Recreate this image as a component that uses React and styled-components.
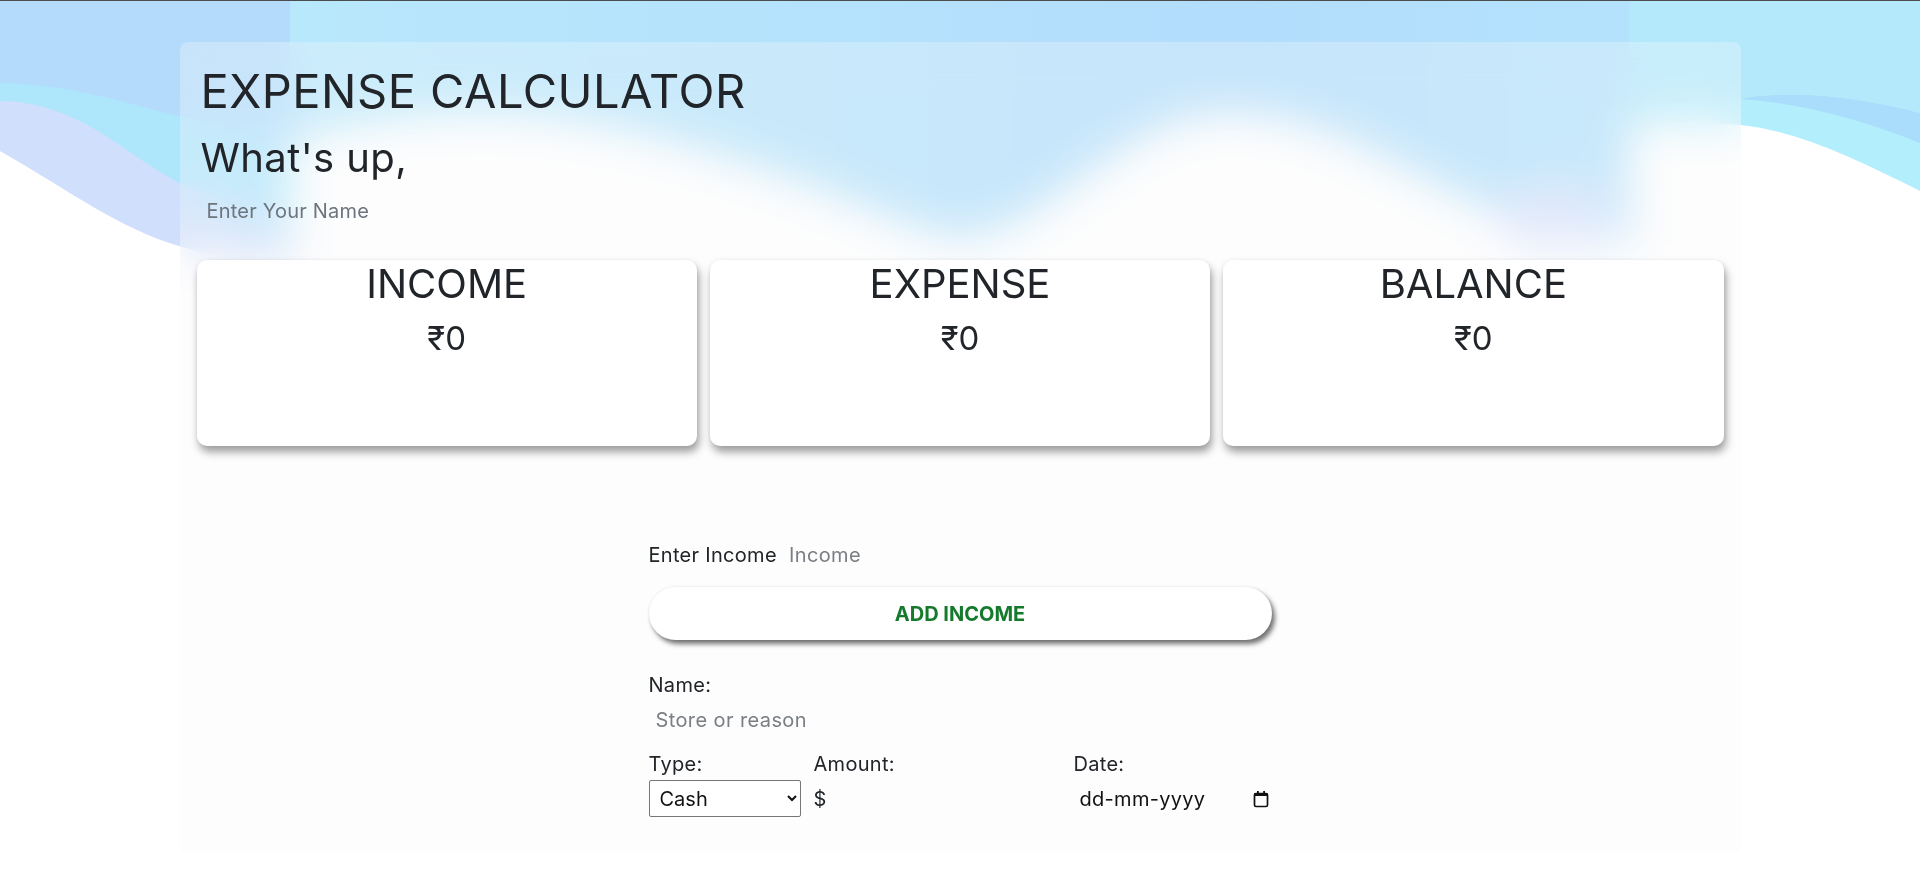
import React from 'react';
import styled, { createGlobalStyle } from 'styled-components';

const GlobalStyle = createGlobalStyle`
  html, body {
    margin: 0;
    padding: 0;
  }
  body {
    font-family: Inter, "Open Sans", sans-serif;
    color: #212529;
    background: #fff;
  }
  * {
    box-sizing: border-box;
  }
`;

const Backdrop = () => (
  <BackdropSvg viewBox="0 0 1920 893" preserveAspectRatio="none">
    <defs>
      <linearGradient id="bandSky" x1="0" y1="0" x2="1" y2="0">
        <stop offset="0" stopColor="#b8e8fc" />
        <stop offset="0.7" stopColor="#b2ddfc" />
        <stop offset="1" stopColor="#b4e2fc" />
      </linearGradient>
    </defs>
    <rect x="0" y="0" width="1920" height="893" fill="#fff" />
    {/* left waves */}
    <path d="M0 0 H290 V262 C240 258 200 252 179 245 C120 228 70 190 0 150 Z" fill="#cfdffc" />
    <path d="M0 0 H290 V235 C250 215 215 195 179 182 C140 160 110 135 80 120 C55 108 30 100 0 100 Z" fill="#aee6fc" />
    <path d="M0 0 H290 V140 C240 128 200 120 179 115 C130 104 80 84 0 82 Z" fill="#b4dbfc" />
    {/* right waves */}
    <path d="M1629 0 H1920 V190 C1860 160 1800 130 1740 124 C1700 120 1660 122 1629 124 Z" fill="#b3eefc" />
    <path d="M1740 98 C1790 88 1860 96 1920 112 V142 C1860 118 1800 102 1740 98 Z" fill="#a9ddfb" />
    <path d="M1629 0 H1920 V112 C1860 96 1790 88 1740 98 C1700 104 1660 110 1629 114 Z" fill="#b4e9fc" />
    {/* centre band */}
    <rect x="290" y="0" width="1339" height="262" fill="url(#bandSky)" />
    <path
      d="M290 140 C350 122 420 110 500 112 C600 116 700 145 800 180 C880 210 930 236 960 236 C1040 236 1120 118 1217 112 C1320 106 1400 168 1480 203 C1530 226 1570 238 1629 243 V262 H290 Z"
      fill="#fff"
    />
    <ellipse cx="1555" cy="215" rx="60" ry="32" fill="#d9e3fd" />
  </BackdropSvg>
);

const CalendarIcon = () => (
  <svg width="16" height="18" viewBox="0 0 16 18">
    <rect x="1.5" y="3.5" width="13" height="13" rx="1.5" fill="none" stroke="#111" strokeWidth="1.7" />
    <rect x="1.5" y="3" width="13" height="3" fill="#111" />
    <rect x="4" y="1" width="1.8" height="3" fill="#111" />
    <rect x="10.2" y="1" width="1.8" height="3" fill="#111" />
  </svg>
);

const summary = [
  { title: 'INCOME', amount: '₹0' },
  { title: 'EXPENSE', amount: '₹0' },
  { title: 'BALANCE', amount: '₹0' },
];

const App = () => {
  return (
    <Page>
      <GlobalStyle />
      <Backdrop />
      <Panel>
        <Header>
          <Title>EXPENSE CALCULATOR</Title>
          <Greeting>What's up,</Greeting>
          <NameInput placeholder="Enter Your Name" />
        </Header>

        <Cards>
          {summary.map((s) => (
            <Card key={s.title}>
              <CardTitle>{s.title}</CardTitle>
              <CardAmount>{s.amount}</CardAmount>
            </Card>
          ))}
        </Cards>

        <Form>
          <IncomeRow>
            <Label>Enter Income</Label>
            <InlineInput placeholder="Income" />
          </IncomeRow>
          <AddButton type="button">ADD INCOME</AddButton>

          <NameBlock>
            <Label>Name:</Label>
            <PlainInput placeholder="Store or reason" />
          </NameBlock>

          <FieldGrid>
            <Field>
              <Label>Type:</Label>
              <TypeSelect defaultValue="Cash">
                <option>Cash</option>
                <option>Card</option>
              </TypeSelect>
            </Field>
            <Field>
              <Label>Amount:</Label>
              <AmountGroup>
                <Dollar>$</Dollar>
                <AmountInput />
              </AmountGroup>
            </Field>
            <Field>
              <Label>Date:</Label>
              <DateBox>
                <DateText>dd-mm-yyyy</DateText>
                <CalendarIcon />
              </DateBox>
            </Field>
          </FieldGrid>
        </Form>
      </Panel>
    </Page>
  );
};

// Styled Components
const Page = styled.div`
  position: relative;
  min-height: 893px;
  overflow: hidden;
  border-top: 1px solid #4d4d4d;
`;

const BackdropSvg = styled.svg`
  position: absolute;
  top: 0;
  left: 0;
  width: 100%;
  height: 893px;
  z-index: 0;
`;

const Panel = styled.main`
  position: relative;
  z-index: 1;
  width: 1561px;
  margin: 41px auto 0;
  padding: 21px 17px 36px;
  border-radius: 8px;
  background: rgba(248, 248, 248, 0.3);
  backdrop-filter: blur(22px);
  -webkit-backdrop-filter: blur(22px);
`;

const Header = styled.header`
  padding-left: 4px;
`;

const Title = styled.h1`
  margin: 0;
  font-size: 47px;
  font-weight: 400;
  line-height: 1.2;
  letter-spacing: 0.5px;
`;

const Greeting = styled.h2`
  margin: 15px 0 0;
  font-size: 40px;
  font-weight: 400;
  line-height: 1.2;
  letter-spacing: 0.4px;
`;

const NameInput = styled.input`
  display: block;
  margin-top: 10px;
  height: 38px;
  width: 320px;
  padding: 0 6px;
  border: none;
  background: transparent;
  font-family: inherit;
  font-size: 20px;
  letter-spacing: 0.2px;
  color: #212529;
  outline: none;

  &::placeholder {
    color: #6c757d;
  }
`;

const Cards = styled.section`
  display: grid;
  grid-template-columns: repeat(3, 1fr);
  gap: 13px;
  margin-top: 30px;
`;

const Card = styled.div`
  height: 186px;
  border-radius: 10px;
  background: #fff;
  box-shadow: 2px 6px 9px rgba(0, 0, 0, 0.38), 0 0 4px rgba(0, 0, 0, 0.05);
  text-align: center;
`;

const CardTitle = styled.h3`
  margin: 0;
  font-size: 40px;
  font-weight: 400;
  line-height: 1.2;
`;

const CardAmount = styled.div`
  margin-top: 11px;
  font-size: 33px;
  line-height: 1.2;
`;

const Form = styled.form`
  width: 623px;
  margin: 94px auto 0;
`;

const Label = styled.label`
  display: block;
  font-size: 20px;
  line-height: 1.5;
  letter-spacing: 0.3px;
  color: #212529;
`;

const IncomeRow = styled.div`
  display: flex;
  align-items: center;
  gap: 12px;

  ${Label} {
    display: inline-block;
  }
`;

const InlineInput = styled.input`
  flex: 1;
  border: none;
  background: transparent;
  padding: 0;
  font-family: inherit;
  font-size: 20px;
  letter-spacing: 0.4px;
  outline: none;

  &::placeholder {
    color: #7a7f85;
  }
`;

const AddButton = styled.button`
  display: block;
  width: 100%;
  height: 53px;
  margin-top: 17px;
  border: none;
  border-radius: 27px;
  background: #fff;
  box-shadow: 3px 4px 5px rgba(0, 0, 0, 0.55), 0 0 3px rgba(0, 0, 0, 0.08);
  font-family: inherit;
  font-size: 20px;
  font-weight: 700;
  color: #147a2c;
  cursor: pointer;
`;

const NameBlock = styled.div`
  margin-top: 30px;
`;

const PlainInput = styled.input`
  display: block;
  width: 100%;
  height: 38px;
  margin-top: 1px;
  padding: 0 7px;
  border: none;
  background: transparent;
  font-family: inherit;
  font-size: 20px;
  letter-spacing: 0.4px;
  outline: none;

  &::placeholder {
    color: #7a7f85;
  }
`;

const FieldGrid = styled.div`
  display: grid;
  grid-template-columns: 152px minmax(0, 1fr) 198px;
  column-gap: 13px;
  margin-top: 10px;
`;

const Field = styled.div`
  display: flex;
  flex-direction: column;
  gap: 1px;
  min-width: 0;
`;

const TypeSelect = styled.select`
  height: 37px;
  width: 152px;
  padding: 0 6px;
  border: 1px solid #767676;
  border-radius: 2px;
  background: #fff;
  font-family: inherit;
  font-size: 20px;
  color: #111;
`;

const AmountGroup = styled.div`
  display: flex;
  align-items: center;
  height: 37px;
`;

const Dollar = styled.span`
  font-size: 20px;
  color: #212529;
`;

const AmountInput = styled.input`
  flex: 1;
  min-width: 0;
  border: none;
  background: transparent;
  padding: 0 8px;
  font-family: inherit;
  font-size: 20px;
  outline: none;
`;

const DateBox = styled.div`
  display: flex;
  align-items: center;
  justify-content: space-between;
  height: 37px;
  padding: 0 3px 0 6px;
`;

const DateText = styled.span`
  font-size: 20px;
  letter-spacing: 0.3px;
  color: #111;
`;

export default App;
